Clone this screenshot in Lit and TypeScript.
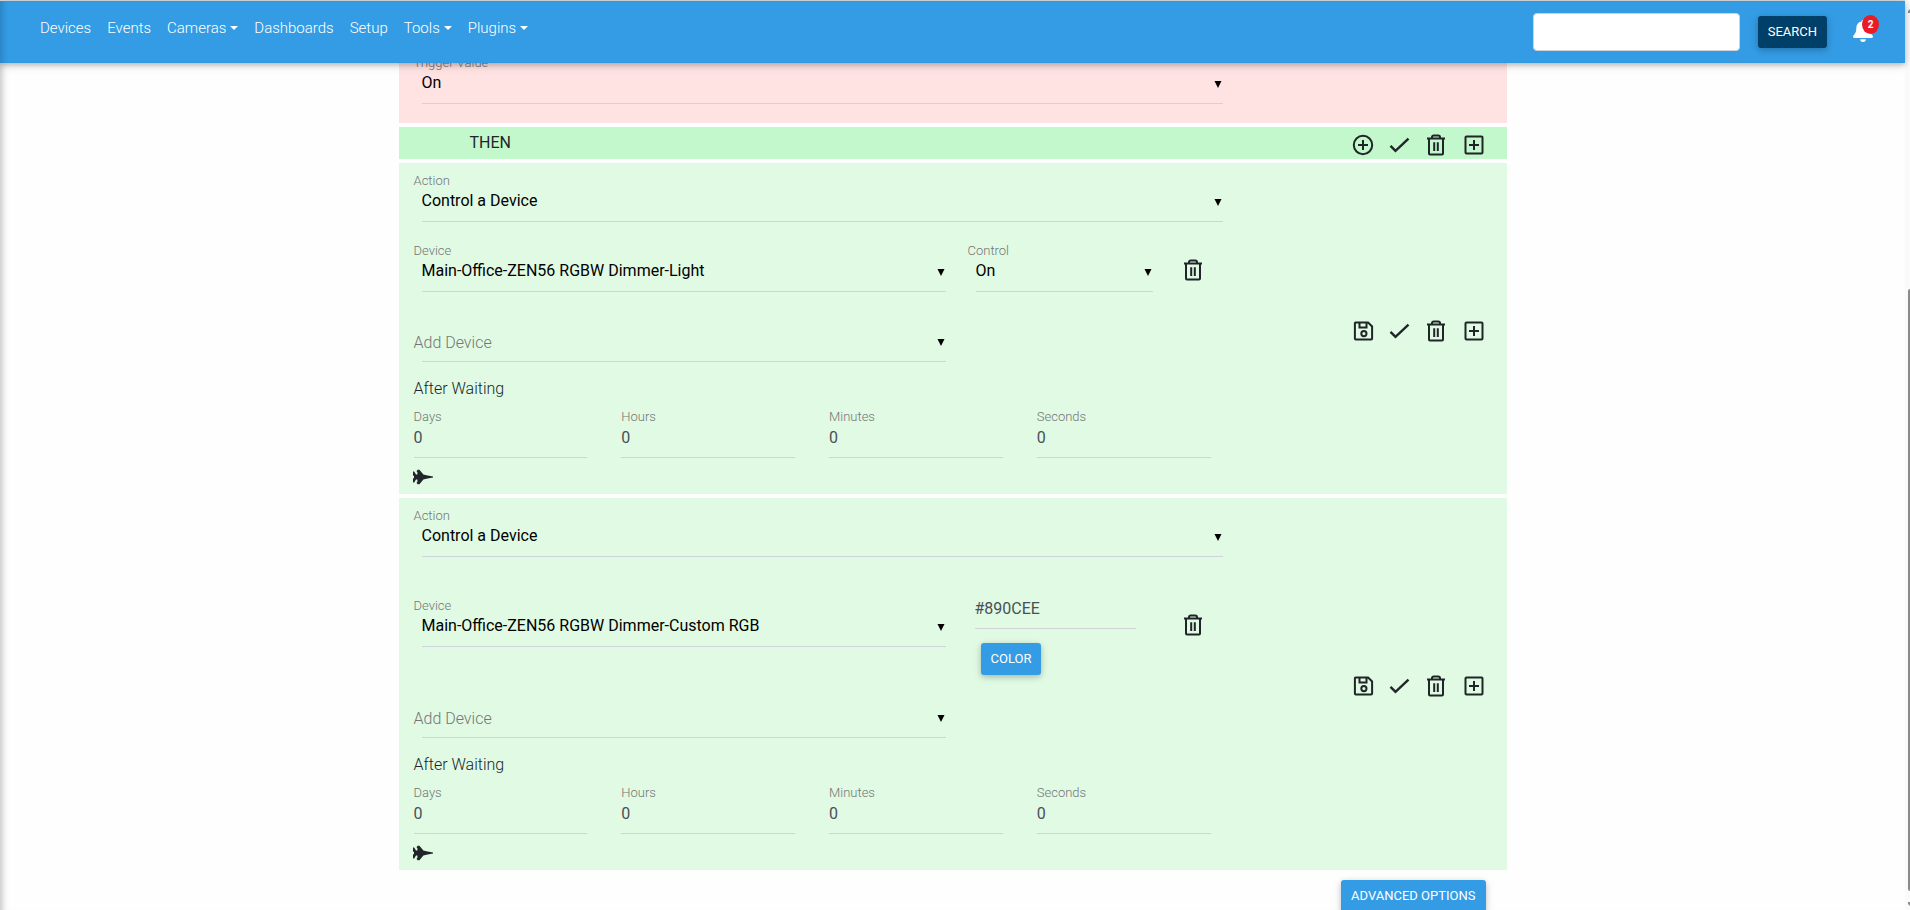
import { LitElement, html, css, svg, nothing, TemplateResult } from "lit";
import { customElement, property } from "lit/decorators.js";

const glyphs: Record<string, TemplateResult> = {
  circlePlus: svg`<circle cx="12" cy="12" r="9.2"/><path d="M12 7v10M7 12h10"/>`,
  check: svg`<path d="M2.500 12.800l5 5L20.500 5.600" stroke-width="2.400"/>`,
  trash: svg`<path d="M2 5.500h18M4 5.500v15a1 1 0 0 0 1 1h12a1 1 0 0 0 1-1v-15M7 5.500V4.200A1.700 1.700 0 0 1 8.700 2.500h4.600A1.700 1.700 0 0 1 15 4.200v1.300M9.200 9.200v8.800M12.800 9.200v8.800"/>`,
  boxPlus: svg`<rect x="3.5" y="3.5" width="17" height="17" rx="1"/><path d="M12 7v10M7 12h10"/>`,
  save: svg`<path d="M4.700 3.500h12.400l4 4v12.100a1 1 0 0 1-1 1H4.900a1 1 0 0 1-1-1V4.300a.8.8 0 0 1 .8-.8zM8.500 3.500v5h7v-5"/><circle cx="12.900" cy="14.600" r="2.600"/>`,
};

@customElement("glyph-button")
export class GlyphButton extends LitElement {
  @property() name = "check";
  @property() label = "";

  static styles = css`
    :host { display: block; line-height: 0; }
    button { display: block; padding: 0; border: 0; background: none; color: #212529; cursor: pointer; }
    svg { display: block; width: 24px; height: 24px; fill: none; stroke: currentColor; stroke-width: 2; }
  `;

  render() {
    return html`<button type="button" aria-label=${this.label}>
      <svg viewBox="0 0 24 24" aria-hidden="true">${glyphs[this.name]}</svg>
    </button>`;
  }
}

@customElement("select-field")
export class SelectField extends LitElement {
  @property() label = "";
  @property() value = "";

  static styles = css`
    :host { display: block; min-width: 0; }
    .field { display: grid; grid-template-rows: 17px 33px; }
    label { grid-area: 1 / 1; font-size: 13px; line-height: 17px; font-weight: 300; color: #757575; }
    .empty label { grid-area: 2 / 1; font-size: 16px; line-height: 28px; z-index: 1; pointer-events: none; }
    select {
      grid-area: 2 / 1; box-sizing: border-box; min-width: 0; height: 33px; margin: 0 0 0 8px; padding: 0 24px 8px 0;
      appearance: none; border: 0; border-bottom: 1px solid #ced4da; border-radius: 0; background: none;
      font: 400 16px/24px Roboto, sans-serif; color: #000; outline: none;
    }
    svg { grid-area: 2 / 1; justify-self: end; width: 8px; height: 7px; margin: 10px 1px 0 0; pointer-events: none; }
  `;

  render() {
    return html`<div class="field ${this.value ? "" : "empty"}">
      <label for="control">${this.label}</label>
      <select id="control"><option>${this.value}</option></select>
      <svg viewBox="0 0 8 7" aria-hidden="true"><path d="M.5 0h7L4 7z"/></svg>
    </div>`;
  }
}

@customElement("action-panel")
export class ActionPanel extends LitElement {
  @property() device = "";
  @property() control = "";
  @property() color = "";

  static styles = css`
    :host { display: grid; grid-template-columns: 3fr 1fr; background: #e0fae4; }
    .form { padding: 9px 0 7px; }
    .cell { padding: 0 7px 0 15px; min-width: 0; }
    .device { display: grid; grid-template-columns: 8fr 3fr 1fr; align-items: start; margin: 20px 0; }
    .device.rgb { margin: 40px 0 13px; }
    .remove { padding: 16px 0 0 22px; }
    .color { margin-top: -2px; padding: 0 24px 0 22px; }
    input {
      display: block; box-sizing: border-box; width: 100%; height: 34px; padding: 1px 0 8px; border: 0;
      border-bottom: 1px solid #ced4da; border-radius: 0; background: none; outline: none;
      font: 400 16px/24px Roboto, sans-serif; color: #495057;
    }
    .pick {
      height: 32px; margin: 14px 0 0 6px; padding: 0 10px; border: 0; border-radius: 3px;
      background: #339ce5; color: #fff; font: 400 13px/32px Roboto, sans-serif; text-transform: uppercase;
      box-shadow: 0 2px 5px rgba(0, 0, 0, .16), 0 2px 10px rgba(0, 0, 0, .12);
    }
    .add { display: grid; grid-template-columns: 8fr 4fr; }
    .wait { margin: 15px 0 8px; padding-left: 15px; font-size: 16px; line-height: 24px; font-weight: 300; color: #212529; }
    .times { display: grid; grid-template-columns: repeat(4, 1fr); }
    .time { padding: 0 19px 0 15px; }
    .time label { display: block; font-size: 13px; line-height: 16px; font-weight: 300; color: #757575; }
    .time input { height: 33px; padding: 0 0 8px; }
    .plane { display: block; margin: 9px 0 0 14px; padding: 0; border: 0; background: none; }
    .plane svg { display: block; width: 20px; height: 20px; fill: #212529; }
    .tools { display: flex; justify-content: flex-end; align-items: center; gap: 13px; padding: 4px 21px 0 0; }
  `;

  render() {
    return html`
      <div class="form">
        <div class="cell"><select-field label="Action" value="Control a Device"></select-field></div>
        <div class="device ${this.color ? "rgb" : ""}">
          <div class="cell"><select-field label="Device" value=${this.device}></select-field></div>
          ${this.color
            ? html`<div class="color">
                <input aria-label="Color value" .value=${this.color}>
                <button class="pick" type="button">Color</button>
              </div>`
            : html`<div class="cell"><select-field label="Control" value=${this.control}></select-field></div>`}
          <div class="remove"><glyph-button name="trash" label="Remove device"></glyph-button></div>
        </div>
        <div class="add"><div class="cell"><select-field label="Add Device"></select-field></div></div>
        <div class="wait">After Waiting</div>
        <div class="times">
          ${["Days", "Hours", "Minutes", "Seconds"].map(
            (unit) => html`<div class="time"><label for=${unit}>${unit}</label><input id=${unit} value="0"></div>`
          )}
        </div>
        <button class="plane" type="button" aria-label="Run now">
          <svg viewBox="0 0 20 20" aria-hidden="true">
            <path d="M0 4.500h1.200L3 7.500h1.400V5H3.800V3.500H4.400V2.800H6.400L10.400 7.400l3 .9 6.600 1.300v.8l-6.600 1.300-3 .9L6.400 17.200H4.400V16.500H3.800V15h.6V12.500H3L1.200 15.500H0v-4.300h1V8.800H0z"/>
          </svg>
        </button>
      </div>
      <div class="tools">
        <glyph-button name="save" label="Save"></glyph-button>
        <glyph-button name="check" label="Apply"></glyph-button>
        <glyph-button name="trash" label="Delete"></glyph-button>
        <glyph-button name="boxPlus" label="Add"></glyph-button>
      </div>
    `;
  }
}

const links = [
  { text: "Devices" },
  { text: "Events" },
  { text: "Cameras", menu: true },
  { text: "Dashboards" },
  { text: "Setup" },
  { text: "Tools", menu: true },
  { text: "Plugins", menu: true },
];

@customElement("app-root")
export class AppRoot extends LitElement {
  static styles = css`
    :host {
      display: grid; grid-template-columns: minmax(0, 1fr) 5px; height: 100vh; overflow: hidden;
      background: #fefefe; font-family: Roboto, sans-serif; color: #212529;
    }
    .page { min-width: 0; border-top: 1px solid #dcdfe1; box-shadow: inset 7px 0 7px -5px rgba(0, 0, 0, .25); }
    nav {
      position: relative; z-index: 2; display: flex; align-items: flex-start; height: 62px; box-sizing: border-box;
      padding: 0 32px 0 40px; background: #339ce5;
      box-shadow: inset 7px 0 7px -5px rgba(0, 0, 0, .2), 0 2px 5px rgba(0, 0, 0, .2), 0 2px 10px rgba(0, 0, 0, .14);
    }
    .links { display: flex; gap: 16px; flex: 1; margin: 0; padding: 15px 0 0; list-style: none; }
    .links a { display: flex; align-items: center; gap: 4px; font-size: 15px; line-height: 24px; font-weight: 300; color: #fff; text-decoration: none; }
    .caret { border: 4px solid transparent; border-top-color: #fff; border-bottom: 0; }
    .query { box-sizing: border-box; width: 207px; height: 38px; margin-top: 12px; padding: 0 12px; border: 1px solid #ced4da; border-radius: 4px; background: #fff; font: 16px Roboto, sans-serif; }
    .btn {
      height: 32px; padding: 0 10px; border: 0; border-radius: 3px; background: #339ce5; color: #fff;
      font: 400 13px/32px Roboto, sans-serif; text-transform: uppercase;
      box-shadow: 0 2px 5px rgba(0, 0, 0, .16), 0 2px 10px rgba(0, 0, 0, .12);
    }
    .search { margin: 15px 26px 0 18px; background: #003f68; }
    .bell { position: relative; display: block; width: 20px; margin-top: 19px; }
    .bell svg { display: block; width: 20px; height: 22px; fill: #fff; }
    .badge {
      position: absolute; left: 9px; top: -5px; width: 17px; height: 19px; border-radius: 50%;
      background: #e81c24; color: #fff; font: 700 10px/19px Roboto, sans-serif; text-align: center;
    }
    main { display: flex; flex-direction: column; gap: 4px; max-width: 1108px; margin: -18px auto 0; }
    .trigger { display: grid; grid-template-columns: 3fr 1fr; padding: 9px 0 19px; background: #ffe2e2; }
    .trigger select-field { padding: 0 7px 0 15px; }
    .then { display: flex; align-items: center; height: 32px; padding: 0 21px 0 71px; background: #c3f7cc; font-size: 16px; line-height: 24px; }
    .then span { flex: 1; }
    .then div { display: flex; gap: 13px; padding-top: 3px; }
    .foot { display: flex; justify-content: flex-end; padding: 6px 21px 0 0; }
    .rail { display: flex; flex-direction: column; align-items: flex-end; padding: 9px 0 6px; background: #fafafa; }
    .rail svg { width: 2px; height: 4px; fill: #8b8b8b; }
    .thumb { width: 2px; height: 602px; margin: auto 0 11px; border-radius: 2px 0 0 2px; background: #8b8b8b; }
  `;

  render() {
    return html`
      <div class="page">
        <nav>
          <ul class="links">
            ${links.map((l) => html`<li><a href="#">${l.text}${l.menu ? html`<i class="caret"></i>` : nothing}</a></li>`)}
          </ul>
          <input class="query" type="text" aria-label="Search">
          <button class="btn search" type="button">Search</button>
          <a class="bell" href="#" aria-label="Notifications">
            <svg viewBox="0 0 20 22" aria-hidden="true">
              <path d="M10 0a1.500 1.500 0 0 0-1.500 1.600C5.200 2.300 3.300 4.800 3.300 8c0 4.200-1.200 5.600-2.400 6.900-.6.600-.9 1.100-.9 1.700 0 .8.600 1.400 1.400 1.400h17.200c.8 0 1.400-.6 1.400-1.400 0-.6-.3-1.100-.9-1.700-1.200-1.300-2.400-2.700-2.400-6.900 0-3.200-1.900-5.700-5.200-6.400A1.500 1.500 0 0 0 10 0zM7.200 19.300a2.800 2.700 0 0 0 5.600 0z"/>
            </svg>
            <span class="badge">2</span>
          </a>
        </nav>
        <main>
          <section class="trigger"><select-field label="Trigger Value" value="On"></select-field></section>
          <section class="then">
            <span>THEN</span>
            <div>
              <glyph-button name="circlePlus" label="Add group"></glyph-button>
              <glyph-button name="check" label="Apply"></glyph-button>
              <glyph-button name="trash" label="Delete"></glyph-button>
              <glyph-button name="boxPlus" label="Add"></glyph-button>
            </div>
          </section>
          <action-panel device="Main-Office-ZEN56 RGBW Dimmer-Light" control="On"></action-panel>
          <action-panel device="Main-Office-ZEN56 RGBW Dimmer-Custom RGB" color="#890CEE"></action-panel>
          <div class="foot"><button class="btn" type="button">Advanced Options</button></div>
        </main>
      </div>
      <div class="rail" aria-hidden="true">
        <svg viewBox="0 0 2 4"><path d="M2 0v4H0V2z"/></svg>
        <div class="thumb"></div>
        <svg viewBox="0 0 2 4"><path d="M2 4V0H0v2z"/></svg>
      </div>
    `;
  }
}
